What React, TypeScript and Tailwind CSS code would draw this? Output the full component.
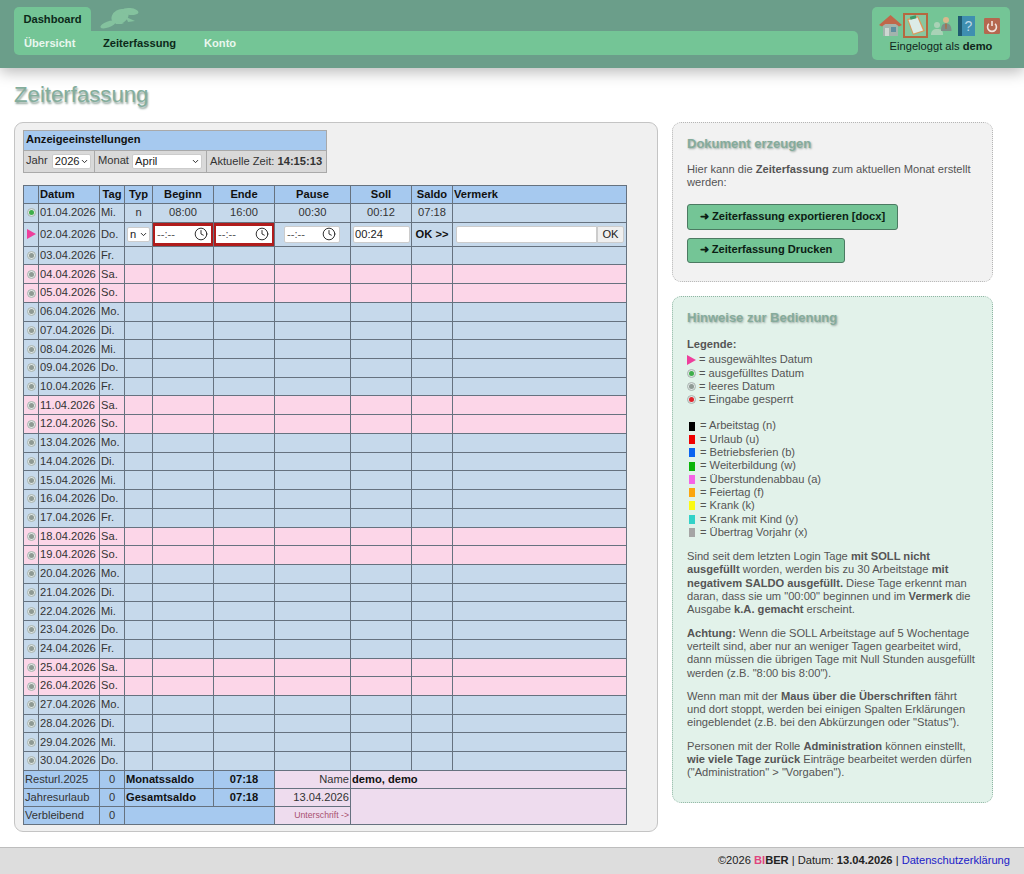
import { ChevronDown, Clock } from "lucide-react";

const days = ["Mi.", "Do.", "Fr.", "Sa.", "So.", "Mo.", "Di."];

const legendDots = [
  { color: "bg-[#3fae4a]", text: "= ausgefülltes Datum" },
  { color: "bg-[#8f9a94]", text: "= leeres Datum" },
  { color: "bg-[#e0222a]", text: "= Eingabe gesperrt" },
];

const legendTypes = [
  { color: "bg-[#000000]", text: "= Arbeitstag (n)" },
  { color: "bg-[#f00000]", text: "= Urlaub (u)" },
  { color: "bg-[#0a64f0]", text: "= Betriebsferien (b)" },
  { color: "bg-[#0ab40a]", text: "= Weiterbildung (w)" },
  { color: "bg-[#f564e6]", text: "= Überstundenabbau (a)" },
  { color: "bg-[#fba60f]", text: "= Feiertag (f)" },
  { color: "bg-[#fafa14]", text: "= Krank (k)" },
  { color: "bg-[#32d2c8]", text: "= Krank mit Kind (y)" },
  { color: "bg-[#a5a5a5]", text: "= Übertrag Vorjahr (x)" },
];

const Dot = ({ color }: { color: string }) => (
  <span className="flex shrink-0 mx-auto w-[9px] h-[9px] rounded-full bg-[#dfe6e4] border border-[#a9b5b0] items-center justify-center">
    <span className={`w-[5px] h-[5px] rounded-full ${color}`}></span>
  </span>
);

const Arrow = () => (
  <svg width="9" height="10" viewBox="0 0 9 10" className="block mx-auto shrink-0">
    <polygon points="0,0 9,5 0,10" fill="#ee3f9c" />
  </svg>
);

const Beaver = () => (
  <svg width="40" height="22" viewBox="0 0 40 22" fill="#84c29e">
    <ellipse cx="8" cy="17.5" rx="8" ry="3" transform="rotate(-20 8 17.5)" />
    <ellipse cx="20" cy="9.5" rx="9" ry="7" transform="rotate(-30 20 9.5)" />
    <ellipse cx="30" cy="4.5" rx="8.5" ry="3.5" transform="rotate(6 30 4.5)" />
    <polygon points="26,10 35,14 28,15" />
    <polygon points="16,14 24,17 16,17" />
  </svg>
);

const HomeIcon = () => (
  <svg width="23" height="21" viewBox="0 0 23 21">
    <rect x="4" y="9" width="15" height="12" fill="#a3b4ad" />
    <rect x="12" y="12" width="5" height="5" fill="#5f8fa0" />
    <rect x="6" y="13" width="4" height="8" fill="#cdd7d2" />
    <path d="M0 10 L11.5 0 L23 10 L20 11.5 L11.5 5 L3 11.5 Z" fill="#c1674a" />
    <path d="M11.5 2 L19 9 L4 9 Z" fill="#c1674a" />
  </svg>
);

const ClipboardIcon = () => (
  <span className="flex w-[25px] h-[25px] border-2 border-[#b5683f] bg-[#88c79f] items-center justify-center">
    <svg width="21" height="21" viewBox="0 0 21 21">
      <path d="M2 4 L13 1 L20 16 L8 20 Z" fill="#d99a5c" />
      <path d="M3.5 5 L12.5 2.5 L18 15.5 L8.5 18.5 Z" fill="#dcebe6" />
      <rect x="5" y="1" width="6" height="3" fill="#3d9a68" transform="rotate(-14 8 2)" />
    </svg>
  </span>
);

const UsersIcon = () => (
  <svg width="21" height="19" viewBox="0 0 21 19">
    <circle cx="6" cy="9" r="3" fill="#a9d2b6" />
    <path d="M0 19 C0 14 3 13 6 13 C10 13 12 14 12 19 Z" fill="#a9d2b6" />
    <circle cx="15" cy="4" r="3" fill="#d9b98c" />
    <path d="M10 15 C10 9 12 7.5 15 7.5 C18 7.5 20.5 9 20.5 15 Z" fill="#7d8f88" />
    <path d="M14.2 7.5 L15.8 7.5 L15.5 13 L14.5 13 Z" fill="#b5683f" />
  </svg>
);

const BookIcon = () => (
  <svg width="17" height="20" viewBox="0 0 17 20">
    <rect x="0" y="0" width="4" height="20" fill="#1f5a70" />
    <rect x="4" y="0" width="13" height="20" fill="#3f8fb0" />
    <text x="10.5" y="15" fontSize="14" textAnchor="middle" fill="#bcd8e6" fontFamily="Liberation Sans, sans-serif">
      ?
    </text>
  </svg>
);

const PowerIcon = () => (
  <svg width="16" height="16" viewBox="0 0 18 18">
    <rect width="18" height="18" rx="1.5" fill="#b5674f" />
    <path d="M5.5 6.5 A5 5 0 1 0 12.5 6.5" fill="none" stroke="#f1e4de" strokeWidth="1.8" />
    <path d="M9 3.5 V9" stroke="#f1e4de" strokeWidth="1.8" />
  </svg>
);

const SelectBox = ({ value, className }: { value: string; className: string }) => (
  <span className={`relative inline-block align-middle h-[15px] ${className}`}>
    <select className="appearance-none block w-full h-full bg-white border border-[#ccc] rounded-[2px] pl-[2px] leading-none text-[#222]">
      <option>{value}</option>
    </select>
    <ChevronDown size={9} strokeWidth={2.5} className="absolute right-[2px] top-[3px] text-[#222] pointer-events-none" />
  </span>
);

const TimeBox = ({ className }: { className: string }) => (
  <div className={`bg-white flex items-center justify-between text-[#555] h-[17px] pl-[2px] pr-[3px] ${className}`}>
    <span>--:--</span>
    <Clock size={14} strokeWidth={1.6} className="text-[#222]" />
  </div>
);

const cell = "border border-[#66727f] p-0 px-[1px] overflow-hidden whitespace-nowrap";
const headCell = `${cell} bg-[#a6c9ef] font-bold text-center text-[#111]`;
const pinkCell = "bg-[#eedcee]";

export default function App() {
  const rows = [];
  for (let i = 3; i <= 30; i++) {
    const day = days[(i - 1) % 7];
    const weekend = day === "Sa." || day === "So.";
    const rowBg = weekend ? "bg-[#fcd6e8]" : "bg-[#c6d9eb]";
    rows.push(
      <tr key={i} className={`h-[18.72px] ${rowBg}`}>
        <td className={cell}>
          <Dot color="bg-[#8f9a94]" />
        </td>
        <td className={cell}>{String(i).padStart(2, "0")}.04.2026</td>
        <td className={cell}>{day}</td>
        <td className={cell}></td>
        <td className={cell}></td>
        <td className={cell}></td>
        <td className={cell}></td>
        <td className={cell}></td>
        <td className={cell}></td>
        <td className={cell}></td>
      </tr>
    );
  }

  return (
    <div className="min-h-[874px] flex flex-col bg-white text-[11.15px] leading-[13.3px] text-[#333] font-['Liberation_Sans',Arial,sans-serif]">
      {/* top bar */}
      <header className="h-[68px] shrink-0 bg-[#6b9e8a] flex justify-between pt-[7px] pl-[14px] pr-[14px] shadow-[0_4px_14px_rgba(0,0,0,0.28)]">
        <div className="w-[844px]">
          <div className="flex h-[24px]">
            <div className="w-[77px] pt-px bg-[#74c596] rounded-t-[5px] flex items-center justify-center font-bold text-[#0c2a1a]">
              Dashboard
            </div>
            <div className="ml-[9px]">
              <Beaver />
            </div>
          </div>
          <nav className="h-[24px] pt-px bg-[#74c596] rounded-b-[5px] rounded-tr-[5px] flex items-center pl-[10px] font-bold text-[#e9f7ee]">
            <span className="w-[79px]">Übersicht</span>
            <span className="w-[101px] text-[#0c2a1a]">Zeiterfassung</span>
            <span>Konto</span>
          </nav>
        </div>
        <div className="w-[138px] h-[53px] bg-[#74c596] rounded-[5px] flex flex-col items-center">
          <div className="flex items-center h-[31px] pt-[6px] pl-[7px] self-start">
            <HomeIcon />
            <span className="ml-[1px]">
              <ClipboardIcon />
            </span>
            <span className="ml-[3px]">
              <UsersIcon />
            </span>
            <span className="ml-[6px]">
              <BookIcon />
            </span>
            <span className="ml-[9px]">
              <PowerIcon />
            </span>
          </div>
          <div className="mt-[2px] text-[#10261b]">
            Eingeloggt als <b>demo</b>
          </div>
        </div>
      </header>

      <main className="flex-1 px-[14px]">
        <h1 className="mt-[15px] h-[24px] text-[22.2px] leading-[24px] text-[#84ad9c] [text-shadow:1px_2px_2px_#8fa39a]">
          Zeiterfassung
        </h1>

        <div className="flex mt-[15px] items-start">
          {/* left panel */}
          <section className="w-[644px] h-[710px] bg-[#f0f0f0] border border-[#c4c4c4] rounded-[9px] pl-[8px] pt-[7px] shrink-0">
            <table className="w-[303px] table-fixed border-collapse">
              <colgroup>
                <col className="w-[71px]" />
                <col className="w-[112px]" />
                <col className="w-[120px]" />
              </colgroup>
              <tbody>
                <tr className="h-[20px]">
                  <td colSpan={3} className="border border-[#a9a9a9] bg-[#a6c9ef] px-[2px] pb-px font-bold text-[#111]">
                    Anzeigeeinstellungen
                  </td>
                </tr>
                <tr className="h-[22px] bg-[#d9d9d9]">
                  <td className="border border-[#a9a9a9] px-[2px] whitespace-nowrap">
                    Jahr <SelectBox value="2026" className="w-[39px] ml-[1px]" />
                  </td>
                  <td className="border border-[#a9a9a9] px-[3px] whitespace-nowrap">
                    Monat <SelectBox value="April" className="w-[70px]" />
                  </td>
                  <td className="border border-[#a9a9a9] px-[3px] whitespace-nowrap">
                    Aktuelle Zeit: <b>14:15:13</b>
                  </td>
                </tr>
              </tbody>
            </table>

            <table className="mt-[12px] w-[603px] table-fixed border-collapse">
              <colgroup>
                <col className="w-[15px]" />
                <col className="w-[61px]" />
                <col className="w-[25px]" />
                <col className="w-[28px]" />
                <col className="w-[61px]" />
                <col className="w-[61px]" />
                <col className="w-[76px]" />
                <col className="w-[61px]" />
                <col className="w-[41px]" />
                <col className="w-[174px]" />
              </colgroup>
              <tbody>
                <tr className="h-[18px]">
                  <td className={headCell}></td>
                  <td className={`${headCell} !text-left`}>Datum</td>
                  <td className={headCell}>Tag</td>
                  <td className={headCell}>Typ</td>
                  <td className={headCell}>Beginn</td>
                  <td className={headCell}>Ende</td>
                  <td className={headCell}>Pause</td>
                  <td className={headCell}>Soll</td>
                  <td className={headCell}>Saldo</td>
                  <td className={`${headCell} !text-left`}>Vermerk</td>
                </tr>
                <tr className="h-[18.72px] bg-[#c6d9eb]">
                  <td className={cell}>
                    <Dot color="bg-[#3fae4a]" />
                  </td>
                  <td className={cell}>01.04.2026</td>
                  <td className={cell}>Mi.</td>
                  <td className={`${cell} text-center`}>n</td>
                  <td className={`${cell} text-center`}>08:00</td>
                  <td className={`${cell} text-center`}>16:00</td>
                  <td className={`${cell} text-center`}>00:30</td>
                  <td className={`${cell} text-center`}>00:12</td>
                  <td className={`${cell} text-center`}>07:18</td>
                  <td className={cell}></td>
                </tr>
                <tr className="h-[24px] bg-[#c6d9eb]">
                  <td className={cell}>
                    <Arrow />
                  </td>
                  <td className={cell}>02.04.2026</td>
                  <td className={cell}>Do.</td>
                  <td className={`${cell} text-center`}>
                    <SelectBox value="n" className="w-[23px]" />
                  </td>
                  <td className={`${cell} !px-0 bg-[#b01c1c]`}>
                    <TimeBox className="mx-[2px]" />
                  </td>
                  <td className={`${cell} !px-0 bg-[#b01c1c]`}>
                    <TimeBox className="mx-[2px]" />
                  </td>
                  <td className={`${cell} !pl-[9px] !pr-[10px]`}>
                    <TimeBox className="border border-[#ccc] rounded-[2px]" />
                  </td>
                  <td className={cell}>
                    <input
                      defaultValue="00:24"
                      className="ml-[1px] w-[57px] h-[17px] bg-white border border-[#ccc] rounded-[2px] px-[1px] block text-[#222]"
                    />
                  </td>
                  <td className={`${cell} text-center font-bold text-[#111]`}>OK &gt;&gt;</td>
                  <td className={cell}>
                    <div className="flex ml-[2px]">
                      <input className="w-[141px] h-[17px] bg-white border border-[#ccc] rounded-l-[2px]" />
                      <button className="w-[27px] h-[17px] bg-[#efefef] border border-[#ccc] rounded-r-[2px] text-[#222]">OK</button>
                    </div>
                  </td>
                </tr>
                {rows}
                <tr className="h-[18px] bg-[#a6c9ef]">
                  <td colSpan={2} className={cell}>Resturl.2025</td>
                  <td className={`${cell} text-center`}>0</td>
                  <td colSpan={2} className={`${cell} font-bold text-[#111]`}>Monatssaldo</td>
                  <td className={`${cell} text-center font-bold text-[#111]`}>07:18</td>
                  <td className={`${cell} text-right ${pinkCell}`}>Name</td>
                  <td colSpan={3} className={`${cell} ${pinkCell} font-bold text-[#111]`}>demo, demo</td>
                </tr>
                <tr className="h-[18px] bg-[#a6c9ef]">
                  <td colSpan={2} className={cell}>Jahresurlaub</td>
                  <td className={`${cell} text-center`}>0</td>
                  <td colSpan={2} className={`${cell} font-bold text-[#111]`}>Gesamtsaldo</td>
                  <td className={`${cell} text-center font-bold text-[#111]`}>07:18</td>
                  <td className={`${cell} text-right ${pinkCell}`}>13.04.2026</td>
                  <td colSpan={3} rowSpan={2} className={`${cell} ${pinkCell}`}></td>
                </tr>
                <tr className="h-[18px] bg-[#a6c9ef]">
                  <td colSpan={2} className={cell}>Verbleibend</td>
                  <td className={`${cell} text-center`}>0</td>
                  <td colSpan={3} className={cell}></td>
                  <td className={`${cell} text-right ${pinkCell} text-[8.7px] text-[#a8506e]`}>Unterschrift -&gt;</td>
                </tr>
              </tbody>
            </table>
          </section>

          {/* right column */}
          <aside className="ml-[14px] w-[321px] shrink-0 flex flex-col gap-[14px]">
            <section className="h-[160px] bg-[#f2f2f2] border border-dotted border-[#b5b5b5] rounded-[9px] px-[14px] pt-[13px] text-[#555]">
              <h2 className="text-[13px] leading-[15px] font-bold text-[#85ab9b] [text-shadow:1px_1px_2px_#9aa8a2]">
                Dokument erzeugen
              </h2>
              <p className="mt-[12px]">
                Hier kann die <b>Zeiterfassung</b> zum aktuellen Monat erstellt werden:
              </p>
              <button className="mt-[14px] block h-[26px] w-[211px] bg-[#74c596] border border-[#4c7a62] rounded-[3px] font-bold text-[#0c2014]">
                ➜ Zeiterfassung exportieren [docx]
              </button>
              <button className="mt-[8px] block h-[25px] w-[158px] bg-[#74c596] border border-[#4c7a62] rounded-[3px] font-bold text-[#0c2014]">
                ➜ Zeiterfassung Drucken
              </button>
            </section>

            <section className="h-[507px] bg-[#e2f2ea] border border-dotted border-[#8fb5a3] rounded-[9px] px-[14px] pt-[13px] text-[#555]">
              <h2 className="text-[13px] leading-[15px] font-bold text-[#85ab9b] [text-shadow:1px_1px_2px_#9aa8a2]">
                Hinweise zur Bedienung
              </h2>
              <p className="mt-[13px] font-bold">Legende:</p>
              <div className="mt-[2px] flex items-center gap-[3px]">
                <span className="w-[9px]">
                  <Arrow />
                </span>
                <span>= ausgewähltes Datum</span>
              </div>
              {legendDots.map((item) => (
                <div key={item.text} className="flex items-center gap-[3px]">
                  <span className="w-[9px]">
                    <Dot color={item.color} />
                  </span>
                  <span>{item.text}</span>
                </div>
              ))}
              <div className="mt-[13px]">
                {legendTypes.map((item) => (
                  <div key={item.text} className="flex items-center gap-[5px] pl-[2px]">
                    <span className={`w-[6px] h-[9px] ${item.color}`}></span>
                    <span>{item.text}</span>
                  </div>
                ))}
              </div>
              <p className="mt-[11px]">
                Sind seit dem letzten Login Tage <b>mit SOLL nicht ausgefüllt</b> worden, werden bis zu 30 Arbeitstage{" "}
                <b>mit negativem SALDO ausgefüllt.</b> Diese Tage erkennt man daran, dass sie um "00:00" beginnen und im{" "}
                <b>Vermerk</b> die Ausgabe <b>k.A. gemacht</b> erscheint.
              </p>
              <p className="mt-[10px]">
                <b>Achtung:</b> Wenn die SOLL Arbeitstage auf 5 Wochentage verteilt sind, aber nur an weniger Tagen
                gearbeitet wird, dann müssen die übrigen Tage mit Null Stunden ausgefüllt werden (z.B. "8:00 bis 8:00").
              </p>
              <p className="mt-[10px]">
                Wenn man mit der <b>Maus über die Überschriften</b> fährt und dort stoppt, werden bei einigen Spalten
                Erklärungen eingeblendet (z.B. bei den Abkürzungen oder "Status").
              </p>
              <p className="mt-[10px]">
                Personen mit der Rolle <b>Administration</b> können einstellt, <b>wie viele Tage zurück</b> Einträge
                bearbeitet werden dürfen ("Administration" &gt; "Vorgaben").
              </p>
            </section>
          </aside>
        </div>
      </main>

      <footer className="h-[27px] shrink-0 bg-[#dddddd] border-t border-[#bdbdbd] flex items-center justify-end pr-[14px] text-[#222]">
        ©2026&nbsp;
        <b>
          <span className="text-[#e0457f]">BI</span>BER
        </b>
        &nbsp;|&nbsp;Datum:&nbsp;<b>13.04.2026</b>&nbsp;|&nbsp;
        <a href="#" className="text-[#2020c8]">Datenschutzerklärung</a>
      </footer>
    </div>
  );
}
